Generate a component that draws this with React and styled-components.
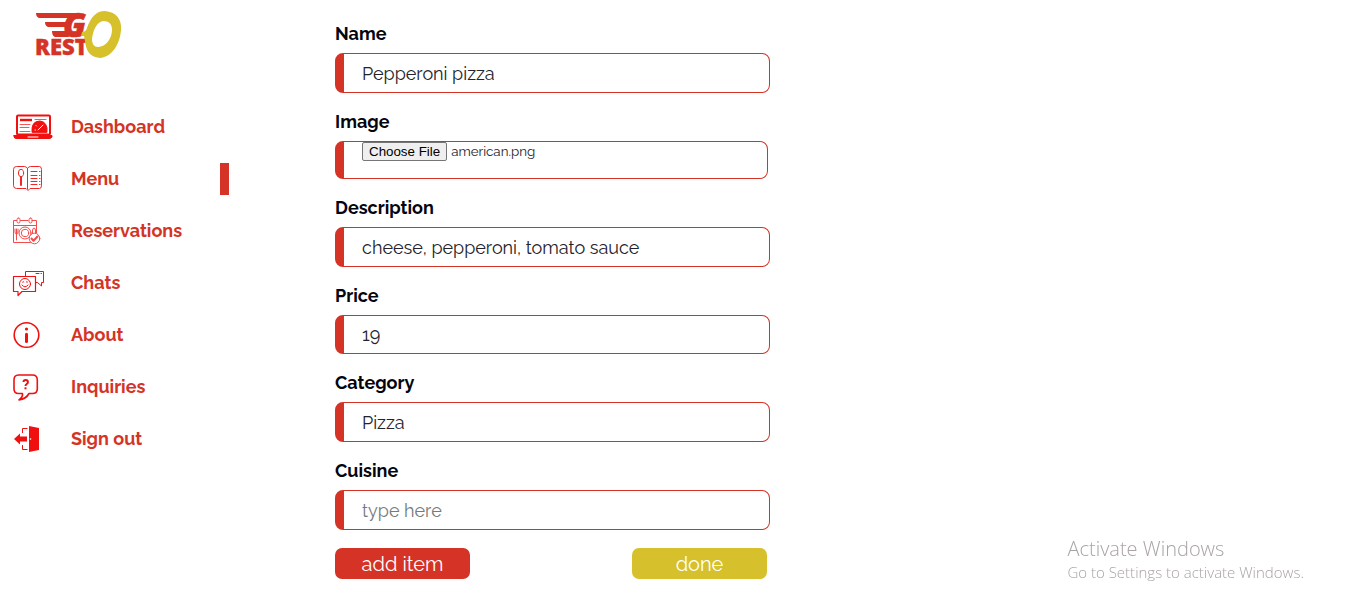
import React, { useEffect, useRef } from "react";
import styled, { createGlobalStyle, css } from "styled-components";

const RED = "#d43325";
const ICON_RED = "#f01010";
const GOLD = "#d6c02b";

const GlobalStyle = createGlobalStyle`
  *, *::before, *::after { box-sizing: border-box; }
  body {
    margin: 0;
    background: #fff;
    font-family: Raleway, Lato, "Open Sans", sans-serif;
  }
`;

const Page = styled.div`
  display: flex;
  align-items: flex-start;
`;

const Sidebar = styled.aside`
  flex: 0 0 229px;
  padding-top: 8px;
`;

const LogoLink = styled.a`
  display: block;
  width: 92px;
  height: 52px;
  margin: 0 0 51px 33px;
  svg { display: block; overflow: visible; }
`;

const Nav = styled.nav`
  display: flex;
  flex-direction: column;
  gap: 20px;
`;

const NavLink = styled.a`
  display: flex;
  align-items: center;
  height: 32px;
  padding-left: 12px;
  color: ${RED};
  font-size: 18px;
  font-weight: 700;
  line-height: 24px;
  text-decoration: none;
  border-right: 9px solid ${(p) => (p.$active ? RED : "transparent")};
`;

const IconSlot = styled.span`
  display: flex;
  flex: 0 0 59px;
  color: ${ICON_RED};
`;

const Main = styled.main`
  flex: 1;
  padding: 22px 24px 32px 106px;
`;

const Form = styled.form`
  display: flex;
  flex-direction: column;
  gap: 17px;
  max-width: 435px;
`;

const Field = styled.div`
  display: flex;
  flex-direction: column;
  gap: 7px;
`;

const Label = styled.label`
  color: #05050f;
  font-size: 18px;
  font-weight: 700;
  line-height: 24px;
`;

const box = css`
  width: 100%;
  margin: 0;
  border: 1px solid ${RED};
  border-left-width: 9px;
  border-radius: 8px;
  background: #fff;
  color: #23232b;
  font-family: inherit;
  font-weight: 400;
  outline: none;
`;

const TextInput = styled.input`
  ${box}
  height: ${(p) => (p.$short ? 39 : 40)}px;
  padding: 0 18px;
  font-size: 18px;
  &::placeholder { color: #757b7b; opacity: 1; }
`;

const FileInput = styled.input`
  ${box}
  width: calc(100% - 2px);
  height: 38px;
  padding: 0 18px;
  &::file-selector-button {
    height: 19px;
    margin: 0 4px 0 0;
    padding: 0 6px;
    border: 1px solid #767676;
    border-radius: 2px;
    background: #efefef;
    color: #000;
    font-family: "Liberation Sans", Arial, sans-serif;
    font-weight: 400;
  }
`;

const Actions = styled.div`
  display: flex;
  justify-content: space-between;
  padding: 1px 3px 0 0;
`;

const ActionButton = styled.button`
  width: 135px;
  height: 31px;
  padding: 0;
  border: 0;
  border-radius: 7px;
  background: ${(p) => p.$color};
  color: #fff;
  font-family: inherit;
  font-size: 20px;
  line-height: 24px;
`;

const Watermark = styled.div`
  position: fixed;
  right: 50px;
  bottom: 30px;
  color: #aaa3a3;
  font-family: "Segoe UI", "Open Sans", "Noto Sans", sans-serif;
  font-weight: 300;
  pointer-events: none;
`;

const WatermarkTitle = styled.div`
  font-size: 20px;
  line-height: 26px;
`;

const WatermarkText = styled.div`
  font-size: 15px;
  line-height: 20px;
`;

const Logo = () => (
  <svg width="92" height="52" viewBox="0 0 92 52" role="img" aria-label="Go Resto">
    <g fill={RED} fontFamily="'Open Sans', sans-serif" fontWeight="800">
      <path d="M3 5H47L45 10H6Q3 9 3 5ZM12 14H35L34 19H15Q12 18 12 14ZM19 23H34L36 29H22Q19 28 19 23Z" />
      <text x="30" y="29" fontSize="33" fontStyle="italic" stroke={RED} strokeWidth="0.600">G</text>
      <text x="2" y="47" fontSize="22" stroke={RED} strokeWidth="0.400">REST</text>
    </g>
    <path
      fill={GOLD}
      fillRule="evenodd"
      d="M72 3C83 4 89 11 88 22C87 36 79 49 67 50C56 49 53 42 52 33L51 28L48 28L49 24Q53 24 54 20C58 9 63 3 72 3ZM70 13C64 14 60 22 59 31C59 36 61 39 65 39C73 39 79 30 79 22C79 16 76 13 70 13Z"
    />
  </svg>
);

const Icon = ({ width = 32, height = 30, children }) => (
  <svg
    width={width}
    height={height}
    viewBox={`0 0 ${width} ${height}`}
    fill="none"
    stroke="currentColor"
    strokeLinecap="round"
    strokeLinejoin="round"
    aria-hidden="true"
  >
    {children}
  </svg>
);

const DashboardIcon = () => (
  <Icon width={42} height={28}>
    <rect x="5" y="2.500" width="33" height="19" rx="1" strokeWidth="2" />
    <path d="M2 22.500H40V24Q39 25.500 37 25.500H5Q2 25.500 2 24Z" fill="currentColor" />
    <path d="M16 24h10" stroke="#fff" />
    <path d="M8 7H20" strokeWidth="2.400" strokeLinecap="butt" />
    <path d="M23 6.500H34M8 11.500H18M8 14.500H17M8 18.500H18" opacity="0.7" />
    <path d="M20 19Q19 8 28 8Q36 9 35 19Z" fill="currentColor" stroke="currentColor" />
    <path d="M26 17L31 12M23 17h.5M24 12.500l.5.5" stroke="#fff" />
  </Icon>
);

const MenuIcon = () => (
  <Icon>
    <g opacity="0.9">
      <path d="M15.500 4.500Q14.500 2.500 12.500 2.500H4.500Q1.500 2.500 1.500 5.500V21.500Q1.500 24.500 4.500 24.500H14L16 26.500L18 24.500H27.500Q29.500 24.500 29.500 21.500V5.500Q29.500 2.500 27.500 2.500H18.500Q16.500 2.500 15.500 4.500V25" />
      <ellipse cx="9" cy="9" rx="2.600" ry="3.700" />
      <path d="M9 13V21" strokeWidth="2" />
      <path d="M19 7.500h6M19 11.500h6M19 14.500h6M19 17.500h6M19 20.500h6M27.500 7.500h.5M27.500 11.500h.5M27.500 14.500h.5M27.500 17.500h.5M27.500 20.500h.5" />
    </g>
  </Icon>
);

const ReservationsIcon = () => (
  <Icon>
    <g opacity="0.75">
      <path d="M4.500 4.500H1.500V26.500H19M8.500 4.500H16M20 4.500H24.500V17M1.500 9.500H24.500" />
      <rect x="5" y="2" width="3" height="5" rx="1.500" />
      <rect x="17" y="2" width="3" height="5" rx="1.500" />
      <circle cx="13" cy="17" r="6" />
      <circle cx="13" cy="17" r="3.700" />
      <path d="M3 13v3q0 2 1.500 2t1.500-2v-3M4.500 13V24M20.500 18v-3q0-3 1.500-3t1.500 3v2" />
      <circle cx="22.500" cy="22.500" r="5.300" fill="#fff" />
      <path d="M19.500 22.500l2 2.300 4-4.300" strokeWidth="2" />
    </g>
  </Icon>
);

const ChatsIcon = () => (
  <Icon>
    <path d="M13.500 8V3.500H31.500V14.500H29.500V18L25.500 14.500H24" />
    <path d="M1.500 8.500H23.500V23.500H10L6 27.500V23.500H1.500Z" strokeWidth="1.200" />
    <circle cx="13" cy="16" r="5.500" />
    <path d="M10 17q3 4 6 0M10.500 14q.7-1 1.400 0M14.200 14q.7-1 1.400 0M24 5.500h3M29 5.500h.5" />
  </Icon>
);

const AboutIcon = () => (
  <Icon>
    <circle cx="14.500" cy="15" r="12.300" strokeWidth="1.600" />
    <circle cx="14.500" cy="9" r="1.600" fill="currentColor" stroke="none" />
    <path d="M14.500 14.300V21.500" strokeWidth="3" />
  </Icon>
);

const InquiriesIcon = () => (
  <Icon>
    <path d="M6.500 3H20.500Q25.300 3 25.300 8V17Q25.300 21.500 20.500 21.500H17Q14 27 7 28Q11 25 10.500 21.500H6.500Q2 21.500 2 17V8Q2 3 6.500 3Z" strokeWidth="1.600" />
    <path d="M11.500 10q0-2 2.200-2t2.200 2q0 1.300-1.200 2t-1.200 2" strokeWidth="2" strokeLinecap="butt" />
    <path d="M12.500 15.300h2v2h-2z" fill="currentColor" stroke="none" />
  </Icon>
);

const SignOutIcon = () => (
  <Icon>
    <path d="M17 2L27 4V26L17 28Z" fill="currentColor" stroke="none" />
    <path d="M2 15L8 9.500V12.500H15V17.500H8V20.500Z" fill="currentColor" stroke="none" />
    <path d="M15.500 4.500H10.500V9M10.500 21V25.500H15.500" strokeLinecap="butt" />
    <circle cx="18.500" cy="15" r="0.800" fill="#fff" stroke="none" />
  </Icon>
);

const links = [
  { text: "Dashboard", icon: DashboardIcon },
  { text: "Menu", icon: MenuIcon, active: true },
  { text: "Reservations", icon: ReservationsIcon },
  { text: "Chats", icon: ChatsIcon },
  { text: "About", icon: AboutIcon },
  { text: "Inquiries", icon: InquiriesIcon },
  { text: "Sign out", icon: SignOutIcon },
];

const TextField = ({ id, label, short, ...rest }) => (
  <Field>
    <Label htmlFor={id}>{label}</Label>
    <TextInput id={id} type="text" placeholder="type here" $short={short} {...rest} />
  </Field>
);

const ImageField = () => {
  const ref = useRef(null);
  useEffect(() => {
    const transfer = new DataTransfer();
    transfer.items.add(new File([""], "american.png", { type: "image/png" }));
    ref.current.files = transfer.files;
  }, []);
  return (
    <Field>
      <Label htmlFor="image">Image</Label>
      <FileInput id="image" type="file" accept="image/*" ref={ref} />
    </Field>
  );
};

export default function App() {
  return (
    <>
      <GlobalStyle />
      <Page>
        <Sidebar>
          <LogoLink href="#home"><Logo /></LogoLink>
          <Nav>
            {links.map(({ text, icon: Glyph, active }) => (
              <NavLink key={text} href={`#${text}`} $active={active}>
                <IconSlot><Glyph /></IconSlot>
                {text}
              </NavLink>
            ))}
          </Nav>
        </Sidebar>
        <Main>
          <Form onSubmit={(e) => e.preventDefault()}>
            <TextField id="name" label="Name" defaultValue="Pepperoni pizza" />
            <ImageField />
            <TextField id="description" label="Description" defaultValue="cheese, pepperoni, tomato sauce" />
            <TextField id="price" label="Price" defaultValue="19" short />
            <TextField id="category" label="Category" defaultValue="Pizza" />
            <TextField id="cuisine" label="Cuisine" />
            <Actions>
              <ActionButton type="submit" $color={RED}>add item</ActionButton>
              <ActionButton type="button" $color={GOLD}>done</ActionButton>
            </Actions>
          </Form>
        </Main>
      </Page>
      <Watermark>
        <WatermarkTitle>Activate Windows</WatermarkTitle>
        <WatermarkText>Go to Settings to activate Windows.</WatermarkText>
      </Watermark>
    </>
  );
}
